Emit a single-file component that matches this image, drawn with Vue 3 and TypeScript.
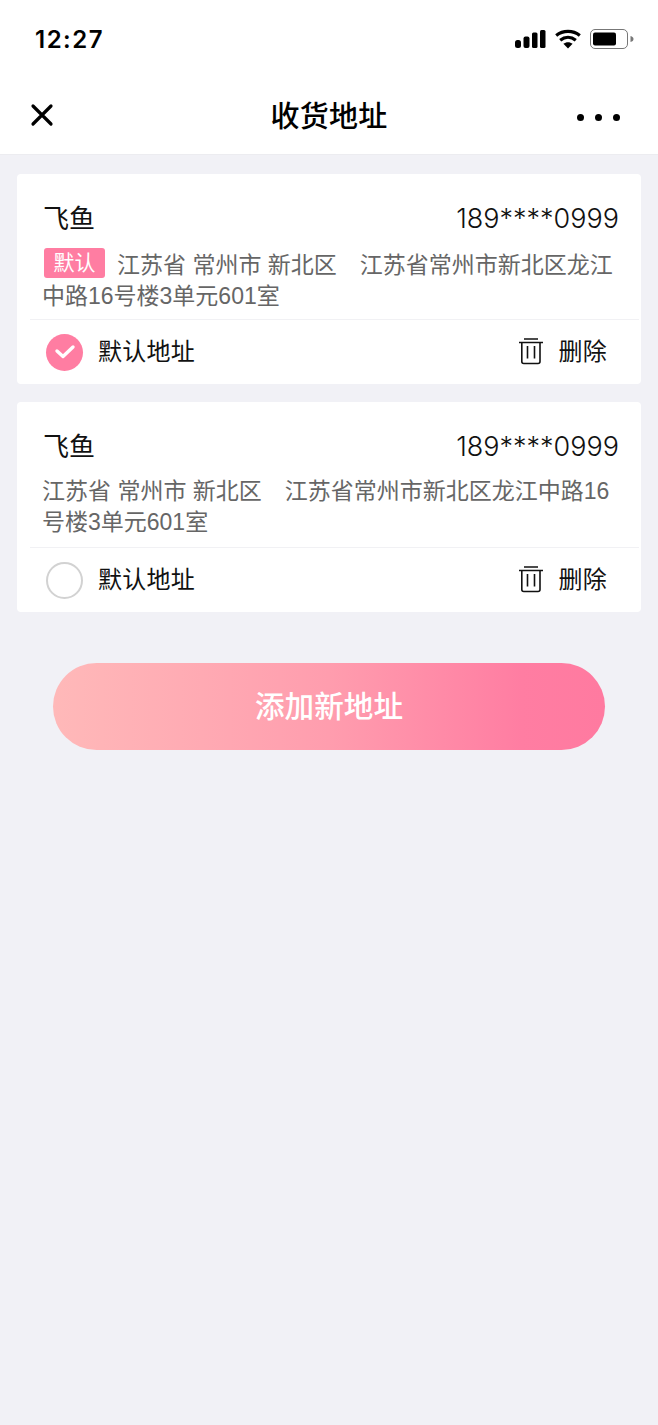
<template>
  <div class="page" lang="zh-CN">
    <header class="header">
      <div class="status-bar">
        <span class="status-bar__time">12:27</span>
        <div class="status-bar__icons">
          <svg width="31" height="20" viewBox="0 0 31 20" fill="#000">
            <rect x="0" y="11" width="6" height="8" rx="2.5" />
            <rect x="8.5" y="7.5" width="6" height="11.5" rx="2" />
            <rect x="17" y="3.5" width="5.5" height="15.5" rx="1.5" />
            <rect x="25" y="1" width="5.5" height="18" rx="1.5" />
          </svg>
          <svg width="26" height="20" viewBox="0 0 26 20" fill="none" stroke="#000" stroke-width="3.2">
            <path d="M1.2 6.5 C8 1 18 1 24.8 6.5" />
            <path d="M5.2 11.2 C10 7.3 16 7.3 20.8 11.2" />
            <path d="M13 19.5 L8.4 14.8 C11 12.6 15 12.6 17.6 14.8 Z" fill="#000" stroke="none" />
          </svg>
          <svg width="44" height="20" viewBox="0 0 44 20" fill="none">
            <rect x="0.5" y="0.5" width="37" height="19" rx="4.5" stroke="#777" />
            <rect x="3" y="3.5" width="23" height="13" rx="2" fill="#000" />
            <path d="M40.5 7 C42.5 7.5 43.5 8.5 43.5 10 C43.5 11.5 42.5 12.5 40.5 13 Z" fill="#777" />
          </svg>
        </div>
      </div>
      <div class="nav">
        <svg class="nav__close" width="24" height="24" viewBox="0 0 24 24" stroke="#000" stroke-width="3.2" stroke-linecap="round">
          <path d="M3 3 L21 21 M21 3 L3 21" />
        </svg>
        <h1 class="nav__title">收货地址</h1>
        <div class="nav__more">
          <i /><i /><i />
        </div>
      </div>
    </header>

    <main class="list">
      <section v-for="item in addresses" :key="item.id" class="card">
        <div class="card__body">
          <div class="card__top">
            <span class="card__name">{{ item.name }}</span>
            <span class="card__phone">{{ item.phone }}</span>
          </div>
          <p class="card__address" :class="{ 'card__address--tagged': item.isDefault }">
            <span v-if="item.isDefault" class="card__tag">默认</span>{{ item.address }}
          </p>
        </div>
        <div class="card__footer">
          <div class="card__check">
            <span class="radio" :class="{ 'radio--on': item.isDefault }">
              <svg v-if="item.isDefault" width="22" height="16" viewBox="0 0 22 16" fill="none" stroke="#fff" stroke-width="3.4" stroke-linecap="round" stroke-linejoin="round">
                <path d="M3 7 L9 12.5 L19 3" />
              </svg>
            </span>
            <span class="card__label">默认地址</span>
          </div>
          <div class="card__delete">
            <svg width="26" height="28" viewBox="0 0 26 28" fill="none" stroke="#111" stroke-width="1.6">
              <path d="M1 4.5 H25 M6 1 H20 M3.8 4.5 V23.5 Q3.8 25.5 5.8 25.5 H20 Q22 25.5 22 23.5 V4.5 M9.5 8 V20.5 M16.5 8 V20.5" />
            </svg>
            <span class="card__label">删除</span>
          </div>
        </div>
      </section>

      <button class="add-btn" type="button">添加新地址</button>
    </main>
  </div>
</template>

<script setup lang="ts">
interface Address {
  id: number;
  name: string;
  phone: string;
  address: string;
  isDefault: boolean;
}

const addresses: Address[] = [
  {
    id: 1,
    name: '飞鱼',
    phone: '189****0999',
    address: '江苏省 常州市 新北区　江苏省常州市新北区龙江中路16号楼3单元601室',
    isDefault: true,
  },
  {
    id: 2,
    name: '飞鱼',
    phone: '189****0999',
    address: '江苏省 常州市 新北区　江苏省常州市新北区龙江中路16号楼3单元601室',
    isDefault: false,
  },
];
</script>

<style>
body {
  background: #f1f1f6;
}
</style>

<style scoped>
.page {
  min-height: 1425px;
  background: #f1f1f6;
  font-family: "Liberation Sans", "Noto Sans CJK SC", sans-serif;
  color: #111;
}

.header {
  background: #fff;
  height: 155px;
  border-bottom: 1px solid #ececf0;
  box-sizing: border-box;
}

.status-bar {
  height: 78px;
  padding: 0 24px 0 35px;
  display: flex;
  align-items: center;
  justify-content: space-between;
}

.status-bar__time {
  font-family: Inter, sans-serif;
  font-size: 24px;
  font-weight: 600;
  letter-spacing: 1.5px;
  color: #000;
}

.status-bar__icons {
  display: flex;
  align-items: center;
  gap: 9px;
}

.nav {
  height: 76px;
  padding: 0 38px;
  display: grid;
  grid-template-columns: 1fr auto 1fr;
  align-items: center;
}

.nav__close {
  margin-left: -8px;
  margin-bottom: 3px;
}

.nav__title {
  margin: 0;
  padding-bottom: 5px;
  font-size: 29px;
  font-weight: 500;
  letter-spacing: 0.25px;
  color: #000;
}

.nav__more {
  justify-self: end;
  margin-top: 2px;
  display: flex;
  gap: 11px;
}

.nav__more i {
  width: 7px;
  height: 7px;
  border-radius: 50%;
  background: #000;
}

.list {
  padding: 19px 17px 0;
  display: flex;
  flex-direction: column;
  gap: 18px;
}

.card {
  background: #fff;
  border-radius: 4px;
  height: 210px;
  display: flex;
  flex-direction: column;
}

.card__body {
  flex: 1;
  padding: 26px 26px 0 25px;
}

.card__top {
  display: flex;
  align-items: center;
  justify-content: space-between;
  height: 36px;
}

.card__name {
  font-size: 26px;
  margin-bottom: 4px;
  margin-left: 1px;
}

.card__phone {
  font-family: Inter, sans-serif;
  font-size: 27px;
  font-weight: 300;
  margin-right: -4px;
}

.card__address {
  margin: 12px 0 0;
  font-size: 23px;
  line-height: 31px;
  color: #666;
}

.card__address--tagged {
  margin-top: 14px;
}

.card__tag {
  display: inline-block;
  width: 61px;
  height: 30px;
  margin-top: -2px;
  margin-left: 2px;
  margin-right: 12px;
  border-radius: 3px;
  background: #ff7da2;
  color: #fff;
  font-size: 21px;
  line-height: 29px;
  text-align: center;
  vertical-align: top;
}

.card__footer {
  margin: 0 2px 0 13px;
  height: 65px;
  border-top: 1px solid #f1f1f4;
  box-sizing: border-box;
  padding: 0 32px 0 16px;
  display: flex;
  align-items: center;
  justify-content: space-between;
  font-size: 24px;
}

.card__check {
  display: flex;
  align-items: center;
  gap: 15px;
}

.card__label {
  margin-bottom: 6px;
  letter-spacing: 0.25px;
}

.radio {
  width: 37px;
  height: 37px;
  box-sizing: border-box;
  border-radius: 50%;
  border: 2px solid #d2d2d2;
  display: flex;
  align-items: center;
  justify-content: center;
}

.radio--on {
  border: none;
  background: #ff7da2;
}

.card__delete {
  display: flex;
  align-items: center;
  gap: 15px;
}

.add-btn {
  align-self: center;
  width: 552px;
  height: 87px;
  margin-top: 33px;
  padding: 0 0 4px;
  border: none;
  border-radius: 44px;
  background: linear-gradient(90deg, #ffb9b9 0%, #ff9dae 50%, #ff7da2 85%, #ff7aa0 100%);
  color: #fff;
  font-family: inherit;
  font-size: 29.6px;
  font-weight: 500;
}
</style>
